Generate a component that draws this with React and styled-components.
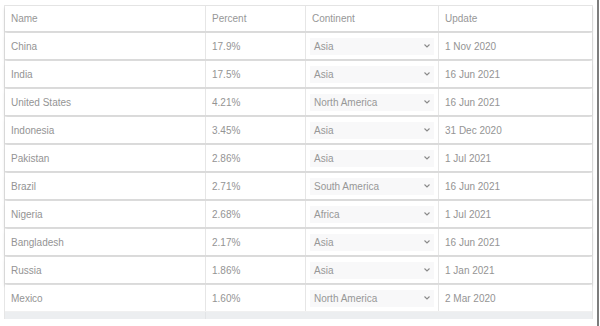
import React from "react";
import styled, { createGlobalStyle } from "styled-components";

const Global = createGlobalStyle`
  html, body { margin: 0; padding: 0; background: #fff; }
  body { font-family: "Liberation Sans", Arial, sans-serif; }
`;

const Page = styled.div`
  width: 600px;
  height: 326px;
  display: flex;
  box-sizing: border-box;
  overflow: hidden;
`;

const Main = styled.div`
  flex: 1;
  padding: 5px 0 0 4px;
`;

const Frame = styled.div`
  width: 3px;
  margin-left: 3px;
  display: flex;
`;

const FrameLine = styled.div`
  width: 2px;
  background: #7d7d7d;
`;

const Table = styled.div`
  width: 589px;
  border-left: 1px solid #e6e6e6;
  border-right: 1px solid #e6e6e6;
  border-top: 1px solid #e6e6e6;
  box-sizing: border-box;
`;

const cols = "200px 100px 133px 1fr";

const HeaderRow = styled.div`
  display: grid;
  grid-template-columns: ${cols};
  height: 25px;
  position: relative;
  box-shadow: 0 2px 3px rgba(0, 0, 0, 0.16);
  border-bottom: 1px solid #dadada;
  background: #fff;
`;

const Row = styled.div`
  display: grid;
  grid-template-columns: ${cols};
  height: 26px;
  margin-top: 1px;
  background: #fff;
  position: relative;
  box-shadow: ${(p) => (p.$last ? "none" : "0 2px 3px rgba(0, 0, 0, 0.16)")};
  border-bottom: 1px solid ${(p) => (p.$last ? "#f0f0f0" : "#dadada")};
`;

const Cell = styled.div`
  display: flex;
  align-items: center;
  padding-left: 6px;
  font-size: 10px;
  color: #949494;
  border-left: ${(p) => (p.$first ? "none" : "1px solid #e6e6e6")};
  white-space: nowrap;
  overflow: hidden;
`;

const HeadCell = styled(Cell)`
  color: #979797;
`;

const SelectBox = styled.div`
  display: flex;
  align-items: center;
  justify-content: space-between;
  width: 124px;
  height: 17px;
  margin-left: -2px;
  padding: 0 3px 0 4px;
  box-sizing: border-box;
  background: #f8f8f9;
  font-size: 10px;
  color: #979797;
`;

const Chevron = () => (
  <svg width="8" height="6" viewBox="0 0 8 6">
    <path d="M1.5 1.5 L4 4 L6.5 1.5" fill="none" stroke="#8a8a8a" strokeWidth="1.1" />
  </svg>
);

const Footer = styled.div`
  display: grid;
  grid-template-columns: ${cols};
  height: 7px;
  background: #eceef0;
`;

const FooterCell = styled.div`
  border-left: ${(p) => (p.$line ? "1px solid #e2e4e6" : "none")};
`;

const data = [
  ["China", "17.9%", "Asia", "1 Nov 2020"],
  ["India", "17.5%", "Asia", "16 Jun 2021"],
  ["United States", "4.21%", "North America", "16 Jun 2021"],
  ["Indonesia", "3.45%", "Asia", "31 Dec 2020"],
  ["Pakistan", "2.86%", "Asia", "1 Jul 2021"],
  ["Brazil", "2.71%", "South America", "16 Jun 2021"],
  ["Nigeria", "2.68%", "Africa", "1 Jul 2021"],
  ["Bangladesh", "2.17%", "Asia", "16 Jun 2021"],
  ["Russia", "1.86%", "Asia", "1 Jan 2021"],
  ["Mexico", "1.60%", "North America", "2 Mar 2020"],
];

export default function App() {
  return (
    <>
      <Global />
      <Page>
        <Main>
          <Table>
            <HeaderRow>
              <HeadCell $first>Name</HeadCell>
              <HeadCell>Percent</HeadCell>
              <HeadCell>Continent</HeadCell>
              <HeadCell>Update</HeadCell>
            </HeaderRow>
            {data.map((r, i) => (
              <Row key={r[0]} $last={i === data.length - 1}>
                <Cell $first>{r[0]}</Cell>
                <Cell>{r[1]}</Cell>
                <Cell>
                  <SelectBox>
                    <span>{r[2]}</span>
                    <Chevron />
                  </SelectBox>
                </Cell>
                <Cell>{r[3]}</Cell>
              </Row>
            ))}
            <Footer>
              <FooterCell />
              <FooterCell $line />
              <FooterCell />
              <FooterCell />
            </Footer>
          </Table>
        </Main>
        <Frame>
          <FrameLine />
        </Frame>
      </Page>
    </>
  );
}
